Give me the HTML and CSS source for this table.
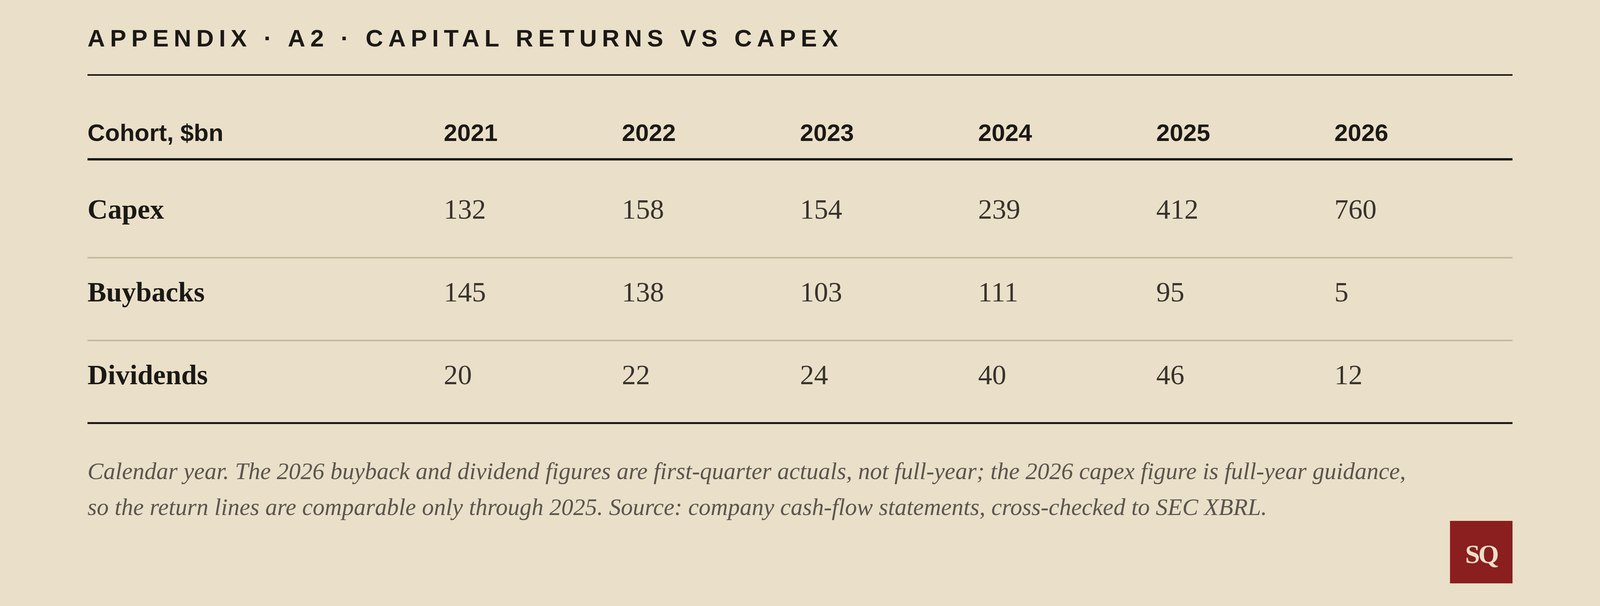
FILE: index.html
```html
<!DOCTYPE html>
<html lang="en">
<head>
<meta charset="utf-8">
<title>Appendix A2 · Capital returns vs capex</title>
<link rel="stylesheet" href="styles.css">
</head>
<body>
<main class="page">
  <header class="title-bar">
    <h1 class="title">APPENDIX · A2 · CAPITAL RETURNS VS CAPEX</h1>
  </header>
  <table class="data">
    <colgroup>
      <col class="c-label">
      <col class="c-year"><col class="c-year"><col class="c-year">
      <col class="c-year"><col class="c-year"><col class="c-year">
    </colgroup>
    <thead>
      <tr>
        <th>Cohort, $bn</th>
        <th>2021</th><th>2022</th><th>2023</th><th>2024</th><th>2025</th><th>2026</th>
      </tr>
    </thead>
    <tbody>
      <tr>
        <td class="label">Capex</td>
        <td>132</td><td>158</td><td>154</td><td>239</td><td>412</td><td>760</td>
      </tr>
      <tr>
        <td class="label">Buybacks</td>
        <td>145</td><td>138</td><td>103</td><td>111</td><td>95</td><td>5</td>
      </tr>
      <tr>
        <td class="label">Dividends</td>
        <td>20</td><td>22</td><td>24</td><td>40</td><td>46</td><td>12</td>
      </tr>
    </tbody>
  </table>
  <footer class="foot">
    <p class="note">Calendar year. The 2026 buyback and dividend figures are first-quarter actuals, not full-year; the 2026 capex figure is full-year guidance, so the return lines are comparable only through 2025. Source: company cash-flow statements, cross-checked to SEC XBRL.</p>
    <div class="mark">SQ</div>
  </footer>
</main>
</body>
</html>
```
FILE: styles.css
```css
html, body {
  margin: 0;
  background: #eadfc8;
}

.page {
  box-sizing: border-box;
  padding: 67px 224px 0;
  color: #1b1915;
}

.title-bar {
  padding-bottom: 61px;
  border-bottom: 4px solid #1b1915;
}

.title {
  margin: 0;
  font: 700 62px/62px "Liberation Sans", Arial, sans-serif;
  letter-spacing: 13px;
  color: #1b1915;
}

.data {
  width: 100%;
  table-layout: fixed;
  border-collapse: separate;
  border-spacing: 0;
  margin-top: 80px;
}

.c-label { width: 25%; }
.c-year { width: 12.5%; }

.data th {
  text-align: left;
  font: 700 62px/62px "Liberation Sans", Arial, sans-serif;
  color: #1b1915;
  padding: 35px 0 34px;
  border-bottom: 6px solid #1b1915;
}

.data td {
  text-align: left;
  font: 400 72px/72px "Liberation Serif", "Times New Roman", serif;
  color: #38332d;
  padding: 50px 0 86px;
  border-bottom: 4px solid #c4b99e;
}

.data td.label {
  font-weight: 700;
  color: #1b1915;
}

.data tbody tr:first-child td {
  padding-top: 89px;
}

.data tbody tr:last-child td {
  padding-bottom: 85px;
  border-bottom: 5px solid #1b1915;
}

.foot {
  display: flex;
  justify-content: space-between;
  align-items: flex-start;
  gap: 64px;
  margin-top: 75px;
}

.note {
  margin: 0;
  flex: 0 1 4000px;
  max-width: 4000px;
  font: italic 400 61px/92px "Liberation Serif", "Times New Roman", serif;
  color: #5a554e;
}

.mark {
  flex: 0 0 160px;
  width: 160px;
  height: 160px;
  margin-top: 173px;
  background: #8b1e1e;
  color: #eadfc8;
  display: flex;
  align-items: center;
  justify-content: center;
  padding-top: 10px;
  box-sizing: border-box;
  font: 700 68px/1 "Liberation Serif", "Times New Roman", serif;
  letter-spacing: -4px;
}
```
